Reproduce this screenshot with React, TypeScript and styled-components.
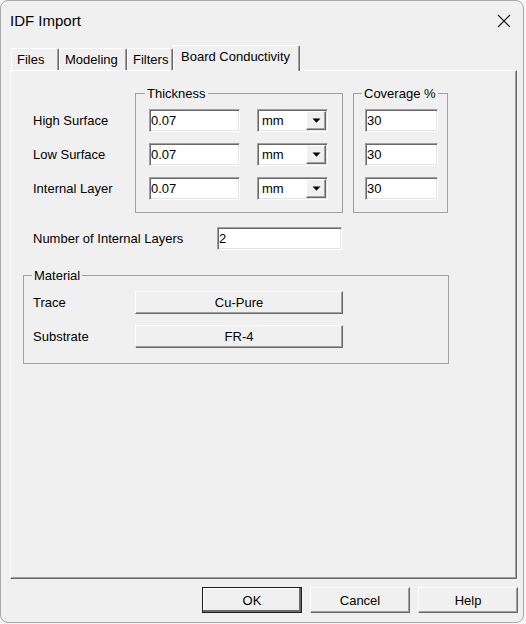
import React from "react";
import styled, { createGlobalStyle, css } from "styled-components";

const GlobalStyle = createGlobalStyle`
  html, body {
    margin: 0;
    padding: 0;
    background: #f6f6f6;
  }
  body {
    font-family: "Liberation Sans", Arial, sans-serif;
    font-size: 13px;
    color: #000;
  }
`;

/**
 * shared bevels
 */
const raised = css`
  border-top: 1px solid #ffffff;
  border-left: 1px solid #ffffff;
  border-right: 1px solid #696969;
  border-bottom: 1px solid #696969;
  box-shadow: inset -1px -1px 0 #a0a0a0, inset 1px 1px 0 #f0f0f0;
`;

const sunken = css`
  border-top: 1px solid #a0a0a0;
  border-left: 1px solid #a0a0a0;
  border-right: 1px solid #ffffff;
  border-bottom: 1px solid #ffffff;
  box-shadow: inset 1px 1px 0 #696969, inset -1px -1px 0 #e3e3e3;
`;

/**
 * window frame
 */
const Window = styled.div`
  box-sizing: border-box;
  width: 524px;
  height: 623px;
  border: 1px solid #a9a9a9;
  border-radius: 8px;
  background: #f0f0f0;
  display: flex;
  flex-direction: column;
  overflow: hidden;
`;

const TitleBar = styled.div`
  height: 38px;
  flex: none;
  display: flex;
  align-items: center;
  justify-content: space-between;
  padding: 0 12px 0 9px;
  font-size: 15px;
`;

const CloseButton = styled.button`
  border: 0;
  padding: 0;
  background: transparent;
  width: 14px;
  height: 14px;
  display: flex;
  align-items: center;
  justify-content: center;
  margin-top: 1px;
`;

/**
 * tabs
 */
const TabStrip = styled.div`
  height: 31px;
  flex: none;
  display: flex;
  align-items: flex-end;
  padding-left: 10px;
`;

const Tab = styled.div<{ $width: number; $active?: boolean }>`
  box-sizing: border-box;
  width: ${({ $width }) => $width}px;
  height: ${({ $active }) => ($active ? 26 : 22)}px;
  margin-bottom: ${({ $active }) => ($active ? -1 : 0)}px;
  padding: 3px 0 0 ${({ $active }) => ($active ? 7 : 5)}px;
  line-height: 15px;
  white-space: nowrap;
  background: #f0f0f0;
  border-top: 1px solid #ffffff;
  border-left: 1px solid #ffffff;
  border-right: 1px solid #696969;
  box-shadow: inset -1px 0 0 #a0a0a0;
  border-radius: 2px 2px 0 0;
  ${({ $active }) => $active && `position: relative; z-index: 1;`}
`;

const Panel = styled.div`
  box-sizing: border-box;
  flex: 1;
  width: 507px;
  margin-left: 9px;
  padding: 15px 0 0 12px;
  border-top: 1px solid #ffffff;
  border-left: 1px solid #ffffff;
  border-right: 1px solid #696969;
  border-bottom: 1px solid #696969;
  box-shadow: inset -1px -1px 0 #a0a0a0;
`;

/**
 * form parts
 */
const TopSection = styled.div`
  display: flex;
  align-items: flex-start;
  margin-left: 10px;
`;

const LabelColumn = styled.div`
  width: 102px;
  padding-top: 23px;
  display: flex;
  flex-direction: column;
  gap: 11px;
`;

const RowLabel = styled.div<{ $width?: number }>`
  height: 23px;
  line-height: 23px;
  width: ${({ $width }) => ($width ? `${$width}px` : "auto")};
  flex: none;
  white-space: nowrap;
`;

const GroupBox = styled.fieldset<{
  $pad: string;
  $width: number;
  $ml?: number;
  $mt?: number;
}>`
  box-sizing: border-box;
  width: ${({ $width }) => $width}px;
  margin: ${({ $mt }) => $mt ?? 0}px 0 0 ${({ $ml }) => $ml ?? 0}px;
  padding: ${({ $pad }) => $pad};
  border: 1px solid #a0a0a0;
  min-inline-size: 0;
`;

const Legend = styled.legend<{ $offset: number }>`
  margin-left: ${({ $offset }) => $offset}px;
  padding: 0 2px;
  line-height: 15px;
  font-size: 13px;
`;

const FieldGrid = styled.div<{ $columns: string }>`
  display: grid;
  grid-template-columns: ${({ $columns }) => $columns};
  column-gap: 17px;
  row-gap: 11px;
`;

const TextBox = styled.input<{ $width: number }>`
  box-sizing: border-box;
  width: ${({ $width }) => $width}px;
  height: 23px;
  margin: 0;
  padding: 0 0 0 1px;
  font-family: "Liberation Sans", Arial, sans-serif;
  font-size: 13px;
  color: #000;
  background: #ffffff;
  outline: none;
  ${sunken}
`;

const Combo = styled.div`
  box-sizing: border-box;
  width: 71px;
  height: 23px;
  display: flex;
  align-items: stretch;
  background: #ffffff;
  padding: 1px;
  ${sunken}
`;

const ComboValue = styled.span`
  flex: 1;
  padding-left: 3px;
  line-height: 19px;
`;

const ComboButton = styled.span`
  box-sizing: border-box;
  width: 20px;
  display: flex;
  align-items: center;
  justify-content: center;
  background: #f0f0f0;
  ${raised}
`;

const LayersRow = styled.div`
  display: flex;
  align-items: center;
  margin: 14px 0 0 10px;
`;

const MaterialRows = styled.div`
  display: flex;
  flex-direction: column;
  gap: 11px;
`;

const MaterialRow = styled.div`
  display: flex;
  align-items: center;
`;

const PushButton = styled.button<{ $width: number; $height: number; $default?: boolean }>`
  box-sizing: border-box;
  width: ${({ $width }) => $width}px;
  height: ${({ $height }) => $height}px;
  margin: 0;
  padding: 0;
  font-family: "Liberation Sans", Arial, sans-serif;
  font-size: 13px;
  color: #000;
  background: #f0f0f0;
  ${raised}
  ${({ $default }) =>
    $default &&
    `
    border: 1px solid #1e1e1e;
    box-shadow: inset -2px -2px 0 #696969, inset 1px 1px 0 #ffffff, inset -1px -1px 0 #a0a0a0;
  `}
`;

const Footer = styled.div`
  flex: none;
  height: 43px;
  display: flex;
  justify-content: flex-end;
  align-items: flex-start;
  gap: 8px;
  padding: 8px 5px 0 0;
  box-sizing: border-box;
`;

/**
 * icons
 */
const CloseIcon = () => (
  <svg width="14" height="14" viewBox="0 0 14 14">
    <path d="M1 1 L13 13 M13 1 L1 13" stroke="#1a1a1a" strokeWidth="1.1" fill="none" />
  </svg>
);

const DownArrow = () => (
  <svg width="9" height="5" viewBox="0 0 9 5">
    <path d="M0.5 0.5 H8.5 L4.5 4.8 Z" fill="#000" />
  </svg>
);

const rows = ["High Surface", "Low Surface", "Internal Layer"];
const tabs = [
  { label: "Files", width: 48 },
  { label: "Modeling", width: 68 },
  { label: "Filters", width: 46 },
  { label: "Board Conductivity", width: 127, active: true },
];

export default function App() {
  return (
    <>
      <GlobalStyle />
      <Window>
        <TitleBar>
          <span>IDF Import</span>
          <CloseButton aria-label="Close">
            <CloseIcon />
          </CloseButton>
        </TitleBar>

        <TabStrip>
          {tabs.map((t) => (
            <Tab key={t.label} $width={t.width} $active={t.active}>
              {t.label}
            </Tab>
          ))}
        </TabStrip>

        <Panel>
          <TopSection>
            <LabelColumn>
              {rows.map((r) => (
                <RowLabel key={r}>{r}</RowLabel>
              ))}
            </LabelColumn>

            <GroupBox $width={208} $pad="8px 14px 12px 13px">
              <Legend $offset={-4}>Thickness</Legend>
              <FieldGrid $columns="91px 71px">
                {rows.map((r) => (
                  <React.Fragment key={r}>
                    <TextBox $width={91} defaultValue="0.07" />
                    <Combo>
                      <ComboValue>mm</ComboValue>
                      <ComboButton>
                        <DownArrow />
                      </ComboButton>
                    </Combo>
                  </React.Fragment>
                ))}
              </FieldGrid>
            </GroupBox>

            <GroupBox $width={95} $ml={10} $pad="8px 9px 12px 11px">
              <Legend $offset={-3}>Coverage %</Legend>
              <FieldGrid $columns="73px">
                {rows.map((r) => (
                  <TextBox key={r} $width={73} defaultValue="30" />
                ))}
              </FieldGrid>
            </GroupBox>
          </TopSection>

          <LayersRow>
            <RowLabel $width={184}>Number of Internal Layers</RowLabel>
            <TextBox $width={125} defaultValue="2" />
          </LayersRow>

          <GroupBox $width={426} $mt={18} $pad="8px 9px 15px 9px">
            <Legend $offset={-1}>Material</Legend>
            <MaterialRows>
              <MaterialRow>
                <RowLabel $width={102}>Trace</RowLabel>
                <PushButton $width={208} $height={23}>
                  Cu-Pure
                </PushButton>
              </MaterialRow>
              <MaterialRow>
                <RowLabel $width={102}>Substrate</RowLabel>
                <PushButton $width={208} $height={23}>
                  FR-4
                </PushButton>
              </MaterialRow>
            </MaterialRows>
          </GroupBox>
        </Panel>

        <Footer>
          <PushButton $width={100} $height={26} $default>
            OK
          </PushButton>
          <PushButton $width={100} $height={26}>
            Cancel
          </PushButton>
          <PushButton $width={100} $height={26}>
            Help
          </PushButton>
        </Footer>
      </Window>
    </>
  );
}
